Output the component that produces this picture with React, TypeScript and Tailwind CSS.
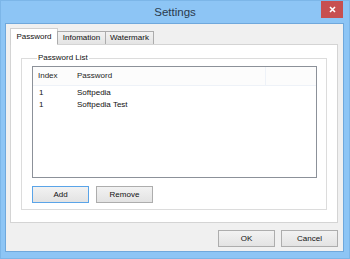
import React from 'react';

const tabs = ['Password', 'Information', 'Watermark'];

const rows = [
  { index: '1', password: 'Softpedia' },
  { index: '1', password: 'Softpedia Test' },
];

function Button({ label, focused }: { label: string; focused?: boolean }) {
  return (
    <button
      className={`w-[57px] h-[17px] flex items-center justify-center text-[8px] text-[#111] bg-gradient-to-b from-[#f2f2f2] to-[#e3e3e3] border ${
        focused ? 'border-[#5aa4e8]' : 'border-[#adadad]'
      }`}
    >
      {label}
    </button>
  );
}

export default function App() {
  return (
    <div
      className="w-[350px] h-[259px] bg-[#8dc5f5] border border-[#7cb6e8] flex flex-col relative"
      style={{ fontFamily: '"Liberation Sans", Arial, sans-serif' }}
    >
      {/* Title bar */}
      <div className="h-[22px] flex items-center justify-center">
        <span className="text-[11.5px] text-[#2b3a4c] mt-[1px]">Settings</span>
      </div>
      <button className="absolute top-0 right-[6px] w-[22px] h-[17px] bg-[#c75050] flex items-center justify-center">
        <svg width="7" height="7" viewBox="0 0 7 7">
          <path d="M1 1L6 6M6 1L1 6" stroke="#fff" strokeWidth="1.6" />
        </svg>
      </button>

      {/* Client area */}
      <div className="flex-1 ml-[4px] mr-[5px] mb-[6px] bg-[#f0f0f0] border border-[#6fa8dc] pt-[4px] pl-[4px] pr-[5px] pb-[4px] flex flex-col">
        {/* Tab strip */}
        <div className="h-[16px] flex items-end relative z-10">
          {tabs.map((t, i) =>
            i === 0 ? (
              <div
                key={t}
                className="w-[48px] h-[17px] -mb-px bg-white border border-b-0 border-[#d0d0d0] flex items-center justify-center text-[8px] text-[#111] pb-[1px]"
              >
                {t}
              </div>
            ) : (
              <div
                key={t}
                className="w-[49px] h-[13px] -ml-px bg-gradient-to-b from-[#f2f2f2] to-[#e4e4e4] border border-b-0 border-[#acacac] flex items-center justify-center text-[8px] text-[#111]"
              >
                {t === 'Information' ? 'Infomation' : t}
              </div>
            )
          )}
        </div>

        {/* Tab panel */}
        <div className="flex-1 bg-white border border-[#d4d4d4] px-[10px] pt-[8px]">
          <fieldset className="border border-[#dcdcdc] pl-[10px] pr-[9px] pb-[6px]">
            <legend className="ml-[5px] px-[1px] text-[8px] leading-[10px] text-[#111]">Password List</legend>
            <div className="mt-[3px] h-[112px] border border-[#8c9199] bg-white flex flex-col">
              <div className="h-[19px] flex items-center text-[8px] text-[#1e1e1e] bg-[#fcfcfc] border-b border-[#eef2f8]">
                <div className="w-[39px] pl-[5px]">Index</div>
                <div className="w-[194px] pl-[5px] h-full flex items-center border-r border-[#eef2f8]">Password</div>
              </div>
              <div className="pt-[1px]">
                {rows.map((r, i) => (
                  <div key={i} className="h-[12px] flex items-center text-[8px] text-[#111]">
                    <div className="w-[39px] pl-[6px]">{r.index}</div>
                    <div className="pl-[5px]">{r.password}</div>
                  </div>
                ))}
              </div>
            </div>
            <div className="mt-[8px] flex gap-[7px]">
              <Button label="Add" focused />
              <Button label="Remove" />
            </div>
          </fieldset>
        </div>

        {/* Dialog buttons */}
        <div className="mt-[7px] flex justify-end gap-[6px]">
          <Button label="OK" />
          <Button label="Cancel" />
        </div>
      </div>
    </div>
  );
}
